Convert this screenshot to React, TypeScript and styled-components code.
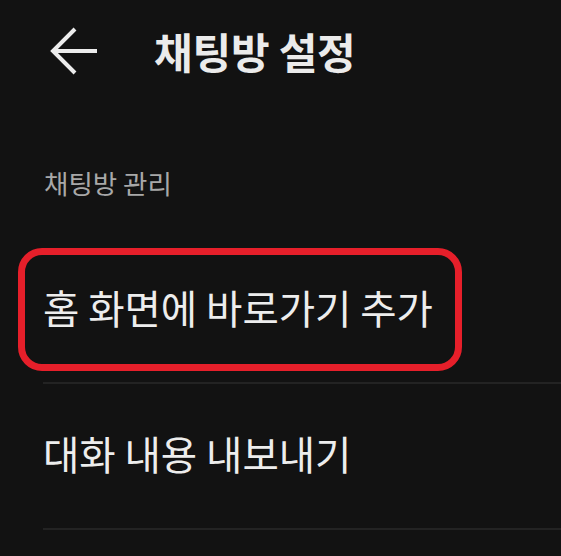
import styled, { createGlobalStyle } from 'styled-components';

const GlobalStyle = createGlobalStyle`
  html, body {
    margin: 0;
    padding: 0;
    background: #121212;
  }
  body {
    font-family: "Noto Sans CJK KR", "Noto Sans", sans-serif;
    overflow: hidden;
  }
`;

const ITEMS = [
  { label: '홈 화면에 바로가기 추가', highlighted: true },
  { label: '대화 내용 내보내기', highlighted: false },
];

const App = () => {
  return (
    <>
      <GlobalStyle />
      <Screen>
        <Header>
          <BackButton aria-label="뒤로">
            <svg width="50" height="50" viewBox="0 0 50 50" fill="none">
              <path
                d="M4 25 H48 M26 3 L4 25 L26 47"
                stroke="#ececec"
                strokeWidth="4"
                strokeLinejoin="miter"
              />
            </svg>
          </BackButton>
          <Title>채팅방 설정</Title>
        </Header>

        <SectionLabel>채팅방 관리</SectionLabel>

        <List>
          {ITEMS.map((item) => (
            <Row key={item.label}>
              <RowText>{item.label}</RowText>
              {item.highlighted && <Highlight />}
            </Row>
          ))}
        </List>
      </Screen>
    </>
  );
};

export default App;

/* ================= STYLES ================= */

const Screen = styled.div`
  width: 561px;
  height: 556px;
  background: #121212;
  display: flex;
  flex-direction: column;
`;

const Header = styled.header`
  height: 102px;
  display: flex;
  align-items: center;
  padding-left: 49px;
`;

const BackButton = styled.button`
  width: 50px;
  height: 50px;
  padding: 0;
  border: 0;
  background: none;
  display: flex;
  align-items: center;
  justify-content: center;
  margin-right: 55px;
  cursor: pointer;
`;

const Title = styled.h1`
  margin: 0;
  font-size: 42px;
  font-weight: 700;
  line-height: 1;
  color: #ebebeb;
  letter-spacing: -0.2px;
`;

const SectionLabel = styled.div`
  margin-top: 68px;
  padding-left: 44px;
  font-size: 26.5px;
  line-height: 1;
  color: #a8a8a8;
`;

const List = styled.div`
  margin-top: 41px;
  display: flex;
  flex-direction: column;
`;

const Row = styled.div`
  position: relative;
  height: 146px;
  margin-left: 43px;
  padding-bottom: 5px;
  display: flex;
  align-items: center;
  border-bottom: 2px solid #232323;
  box-sizing: border-box;
`;

const RowText = styled.span`
  font-size: 39.5px;
  line-height: 1;
  color: #ededed;
  font-weight: 400;
`;

const Highlight = styled.div`
  position: absolute;
  left: -25px;
  top: 10px;
  width: 444px;
  height: 123px;
  box-sizing: border-box;
  border: 7px solid #e61f2a;
  border-radius: 24px;
  pointer-events: none;
`;
